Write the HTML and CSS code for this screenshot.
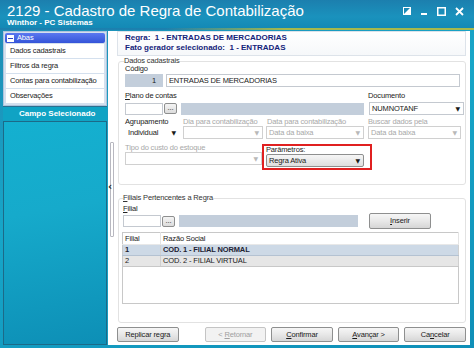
FILE: index.html
```html
<!DOCTYPE html>
<html lang="pt-BR">
<head>
<meta charset="UTF-8">
<title>2129 - Cadastro de Regra de Contabilização</title>
<link rel="stylesheet" href="styles.css">
</head>
<body>
<div class="window">
    <div class="titlebar">
        <div class="titles">
            <h1>2129 - Cadastro de Regra de Contabilização</h1>
            <div class="subtitle">Winthor - PC Sistemas</div>
        </div>
        <div class="controls">
            <svg width="8" height="8" viewBox="0 0 8 8"><rect x="0.5" y="0.5" width="7" height="7" fill="none" stroke="#fff"/><path d="M0 8 L8 0 L8 8 Z" fill="#fff"/></svg>
            <svg width="8" height="8" viewBox="0 0 8 8"><rect x="1" y="6" width="6" height="2" fill="#fff"/></svg>
            <svg width="9" height="9" viewBox="0 0 9 9"><rect x="0.75" y="0.75" width="7.5" height="7.5" fill="none" stroke="#fff" stroke-width="1.5"/></svg>
            <svg width="9" height="9" viewBox="0 0 9 9"><path d="M1 1 L8 8 M8 1 L1 8" stroke="#fff" stroke-width="1.8"/></svg>
        </div>
    </div>

    <div class="workarea">
        <div class="sidebar">
            <div class="tabs-box">
                <div class="tabs-head"><span class="minus"></span>Abas</div>
                <div class="tab-item">Dados cadastrais</div>
                <div class="tab-item">Filtros da regra</div>
                <div class="tab-item">Contas para contabilização</div>
                <div class="tab-item">Observações</div>
            </div>
            <div class="selected-field">Campo Selecionado</div>
            <div class="sidebar-fill"></div>
        </div>

        <div class="main">
            <div class="splitter">
                <div class="split-bar"></div>
                <span class="split-arrow">‹</span>
            </div>
            <div class="content">
                <div class="rule-info">
                    <div>Regra:&nbsp; 1 - ENTRADAS DE MERCADORIAS</div>
                    <div>Fato gerador selecionado:&nbsp; 1 - ENTRADAS</div>
                </div>

                <fieldset class="group group-main">
                    <legend>Dados cadastrais</legend>
                    <div class="lbl">Código</div>
                    <div class="row r-codigo">
                        <div class="field code">1</div>
                        <div class="field wide">ENTRADAS DE MERCADORIAS</div>
                    </div>

                    <div class="row labels l-plano">
                        <div class="lbl w-plano"><u>P</u>lano de contas</div>
                        <div class="lbl">Documento</div>
                    </div>
                    <div class="row r-plano">
                        <div class="field white short"></div>
                        <div class="btn-dots">...</div>
                        <div class="field filled long"></div>
                        <div class="field select doc">NUMNOTANF<span class="arrow">▼</span></div>
                    </div>

                    <div class="row labels l-agr">
                        <div class="lbl w-agr">Agrupamento</div>
                        <div class="lbl off w-dia">Dia para contabilização</div>
                        <div class="lbl off w-data">Data para contabilização</div>
                        <div class="lbl off">Buscar dados pela</div>
                    </div>
                    <div class="row r-agr">
                        <div class="field select agr">Individual<span class="arrow">▼</span></div>
                        <div class="field select off dia"><span class="arrow">▼</span></div>
                        <div class="field select off data">Data da baixa<span class="arrow">▼</span></div>
                        <div class="field select off buscar">Data da baixa<span class="arrow">▼</span></div>
                    </div>

                    <div class="row last">
                        <div class="tipo">
                            <div class="lbl off">Tipo do custo do estoque</div>
                            <div class="field select off tipo-sel"><span class="arrow">▼</span></div>
                        </div>
                        <div class="highlight">
                            <div class="lbl">Parâmetros:</div>
                            <div class="field select combo">Regra Ativa<span class="arrow">▼</span></div>
                        </div>
                    </div>
                </fieldset>

                <fieldset class="group group-filiais">
                    <legend><u>F</u>iliais Pertencentes a Regra</legend>
                    <div class="lbl l-filial"><u>F</u>ilial</div>
                    <div class="row r-filial">
                        <div class="field white short"></div>
                        <div class="btn-dots">...</div>
                        <div class="field filled long-f"></div>
                        <div class="btn inserir"><u>I</u>nserir</div>
                    </div>
                    <table class="grid">
                        <thead>
                            <tr><th class="c1">Filial</th><th>Razão Social</th></tr>
                        </thead>
                        <tbody>
                            <tr class="sel"><td>1</td><td>COD. 1 - FILIAL NORMAL</td></tr>
                            <tr class="alt"><td>2</td><td>COD. 2 - FILIAL VIRTUAL</td></tr>
                            <tr class="empty"><td></td><td></td></tr>
                        </tbody>
                    </table>
                </fieldset>

                <div class="buttons">
                    <div class="btn">Replicar regra</div>
                    <div class="btn disabled">&lt; <u>R</u>etornar</div>
                    <div class="btn"><u>C</u>onfirmar</div>
                    <div class="btn"><u>A</u>vançar &gt;</div>
                    <div class="btn">Ca<u>n</u>celar</div>
                </div>
            </div>
        </div>
    </div>
</div>
</body>
</html>
```

FILE: styles.css
```css
body {
    margin: 0;
    padding: 0;
    width: 474px;
    height: 348px;
    overflow: hidden;
    font-family: "Liberation Sans", Arial, sans-serif;
    font-size: 7.5px;
    letter-spacing: -0.15px;
    color: #1a1a1a;
}

.window {
    width: 474px;
    height: 348px;
    background: linear-gradient(160deg, #1f8ab4 0%, #17a6c8 45%, #0f8fb8 100%);
    display: flex;
    flex-direction: column;
}

/* title bar */

.titlebar {
    height: 28px;
    flex: none;
    display: flex;
    justify-content: space-between;
    padding: 0 10px 0 7px;
    background: linear-gradient(180deg, #1c7fae 0%, #1a92bd 60%, #1489b5 100%);
    border-bottom: 2px solid;
    border-image: linear-gradient(90deg, rgba(160, 180, 70, 0) 35%, #a6b84c 60%, #a6b84c 100%) 1;
}

.titles {
    color: #ffffff;
    letter-spacing: 0;
}

h1 {
    margin: 2px 0 0 0;
    font-weight: normal;
    font-size: 15px;
    line-height: 17px;
}

.subtitle {
    font-weight: bold;
    font-size: 8px;
    line-height: 8px;
}

.controls {
    display: flex;
    gap: 9px;
    align-items: center;
    height: 22px;
}

/* work area */

.workarea {
    flex: 1;
    display: flex;
    padding: 1px 4px 3px 3px;
    min-height: 0;
}

.sidebar {
    width: 104px;
    flex: none;
    display: flex;
    flex-direction: column;
}

.tabs-box {
    background: #d4e0ee;
    border: 1px solid #b0c4dc;
    padding: 1px 2px 2px 2px;
}

.tabs-head {
    background: linear-gradient(180deg, #5a78f0 0%, #3454d8 100%);
    color: #ffffff;
    height: 10px;
    line-height: 10px;
    border-radius: 2px;
    padding-left: 2px;
    margin: 0 -1px 1px -1px;
    display: flex;
    align-items: center;
}

.minus {
    width: 7px;
    height: 7px;
    background: #ffffff;
    margin-right: 3px;
    position: relative;
}

.minus::after {
    content: "";
    position: absolute;
    left: 1px;
    top: 3px;
    width: 5px;
    height: 1px;
    background: #2a44c0;
}

.tab-item {
    background: #ffffff;
    height: 14px;
    line-height: 14px;
    padding-left: 4px;
    margin-top: 1px;
    white-space: nowrap;
}

.selected-field {
    height: 14px;
    line-height: 14px;
    padding-left: 16px;
    background: #10a3c4;
    color: #ffffff;
    font-weight: bold;
    font-size: 8px;
    letter-spacing: 0;
    border-top: 1px solid #2a7090;
    white-space: nowrap;
}

.sidebar-fill {
    flex: 1;
    border: 1px solid #1c6a88;
    background: linear-gradient(170deg, #14b0d0 0%, #16aacb 40%, #0d8fb6 100%);
}

/* main panel */

.main {
    flex: 1;
    min-width: 0;
    background: #ffffff;
    display: flex;
    margin-left: 1px;
}

.splitter {
    width: 8px;
    flex: none;
    position: relative;
}

.split-bar {
    position: absolute;
    left: 2px;
    top: 111px;
    width: 2px;
    height: 93px;
    border: 1px solid #b8b8c0;
    border-radius: 1px;
}

.split-arrow {
    position: absolute;
    left: 0;
    top: 151px;
    font-family: "DejaVu Sans", sans-serif;
    font-size: 10px;
    font-weight: bold;
    line-height: 10px;
}

.content {
    flex: 1;
    min-width: 0;
    padding: 0 4px 0 1px;
    display: flex;
    flex-direction: column;
}

.rule-info {
    height: 22px;
    border: 1px solid #dde3ea;
    padding: 1px 0 0 7px;
    color: #14237a;
    font-weight: bold;
    font-size: 8px;
    letter-spacing: 0;
    line-height: 10px;
    background: linear-gradient(180deg, #ffffff, #f6f8fa);
}

.group {
    margin: 0 0 0 1px;
    padding: 0 0 0 6px;
    border: 1px solid #e2e2e2;
    border-radius: 3px;
    min-width: 0;
}

.group legend {
    padding: 0;
    margin-left: -1px;
    line-height: 8px;
    color: #333;
}

.group-main {
    margin-top: 1px;
    padding-bottom: 14px;
}

.group-filiais {
    margin-top: 9px;
    padding-left: 4px;
    padding-bottom: 18px;
}

.group-filiais legend {
    margin-left: 0;
}

.lbl {
    line-height: 8px;
    height: 8px;
    color: #222;
    white-space: nowrap;
}

.lbl.off {
    color: #a8a8a8;
}

.row {
    display: flex;
    align-items: center;
}

.r-codigo {
    margin-top: 1px;
}

.l-plano {
    margin-top: 5px;
}

.r-plano {
    margin-top: 2px;
}

.l-agr {
    margin-top: 3px;
}

.w-plano {
    width: 243px;
}

.w-agr {
    width: 58px;
}

.w-dia {
    width: 84px;
}

.w-data {
    width: 101px;
}

.field {
    flex: none;
    height: 13px;
    line-height: 11px;
    border: 1px solid #c4c9d0;
    box-sizing: border-box;
    padding: 0 2px;
    white-space: nowrap;
    overflow: hidden;
    position: relative;
}

.field.code {
    width: 38px;
    background: #c3cedb;
    text-align: right;
    padding-right: 6px;
    border-color: #c3cedb;
}

.field.wide {
    width: 294px;
    margin-left: 3px;
}

.field.white.short {
    width: 38px;
    height: 12px;
}

.field.filled {
    background: #c3cedb;
    border-color: #c3cedb;
    height: 12px;
}

.field.long {
    width: 183px;
    margin-left: 4px;
}

.field.long-f {
    width: 179px;
    margin-left: 4px;
}

.btn-dots {
    flex: none;
    width: 13px;
    height: 11px;
    line-height: 7px;
    margin-left: 1px;
    border: 1px solid #8e8f8f;
    border-radius: 2px;
    background: linear-gradient(180deg, #f4f4f4, #dcdcdc);
    text-align: center;
    box-sizing: border-box;
}

.field.select {
    padding-right: 10px;
}

.arrow {
    position: absolute;
    right: 3px;
    top: 0;
    font-family: "DejaVu Sans", sans-serif;
    font-size: 6px;
}

.field.select.off {
    color: #a8a8a8;
    border-color: #d0d0d0;
}

.field.select.off .arrow {
    color: #b8b8b8;
}

.field.doc {
    width: 95px;
    margin-left: 5px;
}

.field.agr {
    width: 55px;
    border-color: #ffffff;
}

.field.dia {
    width: 80px;
    margin-left: 3px;
}

.field.data {
    width: 98px;
    margin-left: 3px;
}

.field.buscar {
    width: 93px;
    margin-left: 4px;
}

.row.last {
    margin-top: 5px;
    align-items: flex-start;
}

.tipo {
    width: 137px;
    flex: none;
}

.field.tipo-sel {
    width: 137px;
}

.highlight {
    width: 102px;
    height: 22px;
    flex: none;
    border: 2px solid #e02020;
    padding: 0 2px;
}

.field.combo {
    width: 98px;
    border: 1px solid #8e8f8f;
    border-radius: 2px;
    background: linear-gradient(180deg, #f6f6f6, #dedede);
}

.l-filial {
    margin-top: 3px;
}

.btn {
    height: 15px;
    line-height: 13px;
    border: 1px solid #8e8f8f;
    border-radius: 2px;
    background: linear-gradient(180deg, #f6f6f6 0%, #e8e8e8 50%, #d6d6d6 100%);
    text-align: center;
    box-sizing: border-box;
    white-space: nowrap;
}

.btn.inserir {
    flex: none;
    width: 62px;
    height: 16px;
    line-height: 14px;
    margin-left: 11px;
}

.grid {
    margin: 3px 0 0 -1px;
    width: 337px;
    height: 72px;
    border-collapse: collapse;
    border: 1px solid #c8c8c8;
    font-size: 7.5px;
}

.grid th {
    font-weight: normal;
    text-align: left;
    height: 11px;
    line-height: 10px;
    padding: 0 2px;
    border-right: 1px solid #e4e4e4;
    border-bottom: 1px solid #e8e8e8;
}

.grid th.c1 {
    width: 33px;
}

.grid td {
    height: 10px;
    padding: 0 2px;
    line-height: 10px;
    border-right: 1px solid #d0d0d0;
}

.grid tr.sel td {
    background: #cdd9e6;
    font-weight: bold;
    color: #223;
    border-bottom: 1px solid #b4c2d2;
}

.grid tr.alt td {
    background: #e6e6e6;
    border-bottom: 1px solid #c8c8c8;
}

.grid tr.empty td {
    height: auto;
    border-right: none;
}

.buttons {
    display: flex;
    gap: 5px;
    margin-top: auto;
    padding-bottom: 3px;
}

.buttons .btn {
    width: 62px;
    height: 15px;
    line-height: 13px;
}

.buttons .btn:first-child {
    margin-right: 21px;
}

.btn.disabled {
    color: #a0a0a0;
    border-color: #c4c4c4;
    background: #f2f2f2;
}
```
